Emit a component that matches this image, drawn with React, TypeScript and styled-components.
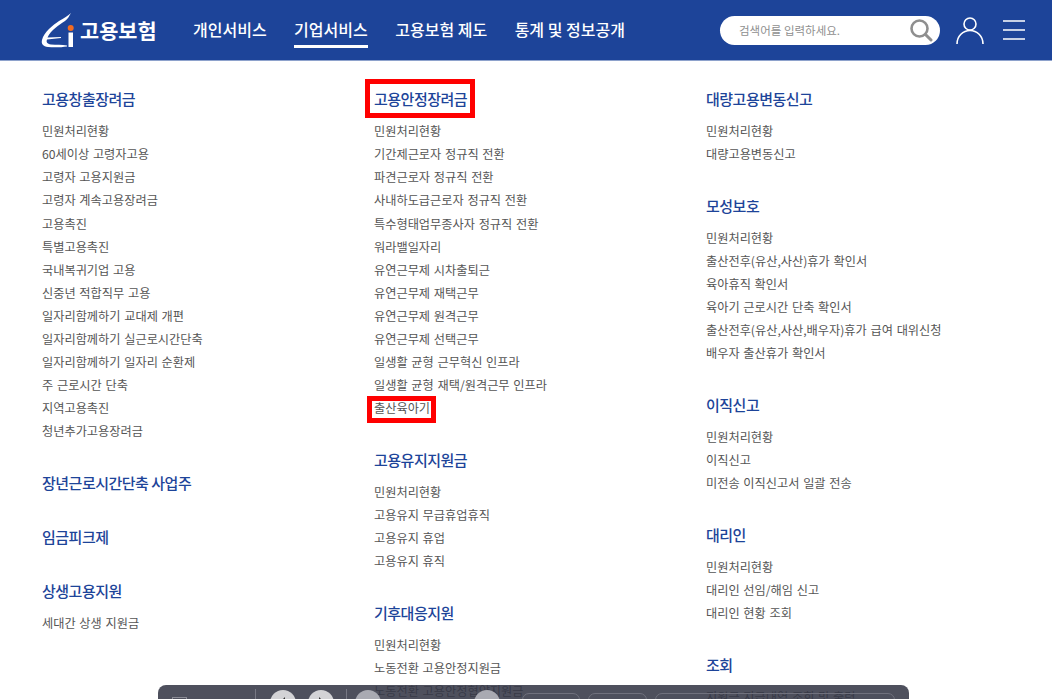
import React from "react";
import styled, { createGlobalStyle } from "styled-components";

const Global = createGlobalStyle`
  html, body { margin: 0; padding: 0; height: 100%; overflow: hidden; background: #fff; }
  body { font-family: "Noto Sans CJK KR", "Noto Sans", sans-serif; }
  * { box-sizing: border-box; }
`;

const Page = styled.div`
  position: relative;
  width: 1052px;
  height: 699px;
  overflow: hidden;
`;

const Header = styled.header`
  height: 61px;
  background: #1d4499;
  border-bottom: 1px solid #8ea2cc;
  display: flex;
  align-items: center;
  padding: 0 27px 0 41px;
`;

const Logo = styled.div`
  display: flex;
  align-items: center;
  gap: 6px;
  width: 152px;
  color: #fff;
  font-weight: 700;
  font-size: 20.8px;
`;

const Nav = styled.nav`
  display: flex;
  gap: 27.5px;
  flex: 1;
`;

const NavLink = styled.a<{ $active?: boolean }>`
  color: #fff;
  font-size: 16px;
  font-weight: 500;
  line-height: 24px;
  padding: 2px 0 4px;
  margin-top: 3px;
  white-space: nowrap;
  border-bottom: 3px solid ${(p) => (p.$active ? "#fff" : "transparent")};
`;

const Search = styled.div`
  width: 220px;
  height: 29px;
  border-radius: 14.5px;
  background: #fff;
  display: flex;
  align-items: center;
  justify-content: space-between;
  padding: 0 7px 0 19px;
  color: #8f8f8f;
  font-size: 11.5px;
`;

const HeaderIcons = styled.div`
  display: flex;
  align-items: center;
  gap: 19px;
  margin-left: 16px;
`;

const Columns = styled.main`
  display: grid;
  grid-template-columns: 332px 332px 1fr;
  padding: 22px 0 0 42px;
`;

const Section = styled.section<{ $bare?: boolean }>`
  padding-bottom: ${(p) => (p.$bare ? "16.6px" : "23.4px")};
`;

const Heading = styled.h3<{ $bare?: boolean }>`
  margin: 0 0 ${(p) => (p.$bare ? "10.4px" : "10.2px")};
`;

const HeadingText = styled.span<{ $marked?: boolean }>`
  position: relative;
  display: inline-block;
  font-size: 15px;
  line-height: 22px;
  font-weight: 500;
  letter-spacing: -0.5px;
  color: #1d4499;
  &::after {
    content: "";
    display: ${(p) => (p.$marked ? "block" : "none")};
    position: absolute;
    left: -9px;
    right: -8px;
    top: -9px;
    bottom: -8px;
    border: 5px solid #ff0000;
  }
`;

const List = styled.ul`
  list-style: none;
  margin: 0;
  padding: 0;
`;

const Item = styled.li`
  height: 23.1px;
  line-height: 23.1px;
  font-size: 12.2px;
  word-spacing: 1px;
  color: #555;
  white-space: nowrap;
`;

const ItemText = styled.span<{ $marked?: boolean }>`
  position: relative;
  display: inline-block;
  &::after {
    content: "";
    display: ${(p) => (p.$marked ? "block" : "none")};
    position: absolute;
    left: -7px;
    right: -6px;
    top: -1px;
    bottom: -3px;
    border: 5px solid #ff0000;
  }
`;

const Dock = styled.div`
  position: absolute;
  left: 158px;
  top: 685px;
  width: 751px;
  height: 30px;
  border-radius: 8px 8px 0 0;
  background: rgba(52, 54, 69, 0.87);
`;

const DockSquare = styled.span`
  position: absolute;
  left: 14px;
  top: 12px;
  width: 15px;
  height: 15px;
  border: 1px solid #8a8b95;
`;

const DockLine = styled.span<{ $x: number }>`
  position: absolute;
  left: ${(p) => p.$x}px;
  top: 4px;
  width: 1px;
  height: 24px;
  background: #777884;
`;

const DockRound = styled.span<{ $x: number; $dim?: boolean }>`
  position: absolute;
  left: ${(p) => p.$x}px;
  top: 5px;
  width: 26px;
  height: 26px;
  border-radius: 50%;
  background: ${(p) => (p.$dim ? "#a9aab2" : "#d3d3d6")};
  display: flex;
  align-items: center;
  justify-content: center;
`;

const DockPill = styled.span<{ $x: number; $w: number }>`
  position: absolute;
  left: ${(p) => p.$x}px;
  width: ${(p) => p.$w}px;
  top: 8px;
  height: 26px;
  border: 1px solid #70717d;
  border-radius: 7px;
`;

type Sec = { title: string; items?: string[]; marked?: boolean };

const col1: Sec[] = [
  {
    title: "고용창출장려금",
    items: [
      "민원처리현황", "60세이상 고령자고용", "고령자 고용지원금", "고령자 계속고용장려금", "고용촉진",
      "특별고용촉진", "국내복귀기업 고용", "신중년 적합직무 고용", "일자리함께하기 교대제 개편",
      "일자리함께하기 실근로시간단축", "일자리함께하기 일자리 순환제", "주 근로시간 단축", "지역고용촉진", "청년추가고용장려금",
    ],
  },
  { title: "장년근로시간단축 사업주" },
  { title: "임금피크제" },
  { title: "상생고용지원", items: ["세대간 상생 지원금"] },
];

const col2: Sec[] = [
  {
    title: "고용안정장려금",
    marked: true,
    items: [
      "민원처리현황", "기간제근로자 정규직 전환", "파견근로자 정규직 전환", "사내하도급근로자 정규직 전환",
      "특수형태업무종사자 정규직 전환", "워라밸일자리", "유연근무제 시차출퇴근", "유연근무제 재택근무",
      "유연근무제 원격근무", "유연근무제 선택근무", "일생활 균형 근무혁신 인프라", "일생활 균형 재택/원격근무 인프라", "출산육아기",
    ],
  },
  { title: "고용유지지원금", items: ["민원처리현황", "고용유지 무급휴업휴직", "고용유지 휴업", "고용유지 휴직"] },
  { title: "기후대응지원", items: ["민원처리현황", "노동전환 고용안정지원금", "노동전환 고용안정협약지원금"] },
];

const col3: Sec[] = [
  { title: "대량고용변동신고", items: ["민원처리현황", "대량고용변동신고"] },
  {
    title: "모성보호",
    items: [
      "민원처리현황", "출산전후(유산,사산)휴가 확인서", "육아휴직 확인서", "육아기 근로시간 단축 확인서",
      "출산전후(유산,사산,배우자)휴가 급여 대위신청", "배우자 출산휴가 확인서",
    ],
  },
  { title: "이직신고", items: ["민원처리현황", "이직신고", "미전송 이직신고서 일괄 전송"] },
  { title: "대리인", items: ["민원처리현황", "대리인 선임/해임 신고", "대리인 현황 조회"] },
  { title: "조회", items: ["지원금 지급내역 조회 및 출력"] },
];

function Column({ sections }: { sections: Sec[] }) {
  return (
    <div>
      {sections.map((s) => (
        <Section key={s.title} $bare={!s.items}>
          <Heading $bare={!s.items}>
            <HeadingText $marked={s.marked}>{s.title}</HeadingText>
          </Heading>
          {s.items && (
            <List>
              {s.items.map((it) => (
                <Item key={it}>
                  <ItemText $marked={it === "출산육아기"}>{it}</ItemText>
                </Item>
              ))}
            </List>
          )}
        </Section>
      ))}
    </div>
  );
}

export default function App() {
  return (
    <Page>
      <Global />
      <Header>
        <Logo>
          <svg width="33" height="35" viewBox="0 0 33 35" fill="none">
            <path
              d="M30 0 C28 3 27 6 24 8 C18 12 10 17 6.5 24.5 L20 24 L20 25 L6 26.5 C5 29 6 31 10 31.5 C15 32 21 31.5 26 32.5 L26 33.5 C20 34.5 12 34.5 7 34 C2 33.5 0 31 1 27 C3 19 12 12 18 8 C23 5 27 3 30 0 Z"
              fill="#fff"
            />
            <circle cx="29.7" cy="15" r="3" fill="#f36b21" />
            <rect x="27.5" y="19.5" width="4.5" height="14.5" fill="#fff" />
          </svg>
          <span>고용보험</span>
        </Logo>
        <Nav>
          <NavLink>개인서비스</NavLink>
          <NavLink $active>기업서비스</NavLink>
          <NavLink>고용보험 제도</NavLink>
          <NavLink>통계 및 정보공개</NavLink>
        </Nav>
        <Search>
          <span>검색어를 입력하세요.</span>
          <svg width="24" height="24" viewBox="0 0 24 24" fill="none" stroke="#8f8f8f">
            <circle cx="10.5" cy="10.5" r="8" strokeWidth="2.6" />
            <path d="M16.5 16.5 L22 22" strokeWidth="3" strokeLinecap="round" />
          </svg>
        </Search>
        <HeaderIcons>
          <svg width="28" height="28" viewBox="0 0 28 28" fill="none" stroke="#fff" strokeWidth="1.6">
            <circle cx="14" cy="8" r="6" />
            <path d="M1 28 C1 20 7 14.5 14 14.5 C21 14.5 27 20 27 28" />
          </svg>
          <svg width="22" height="20" viewBox="0 0 22 20" fill="none" stroke="#fff" strokeWidth="1.6">
            <path d="M0 1 H22 M0 10 H22 M0 19 H22" />
          </svg>
        </HeaderIcons>
      </Header>
      <Columns>
        <Column sections={col1} />
        <Column sections={col2} />
        <Column sections={col3} />
      </Columns>
      <Dock>
        <DockSquare />
        <DockLine $x={97} />
        <DockRound $x={112}>
          <svg width="10" height="12" viewBox="0 0 10 12"><path d="M7 0 L1 6 L7 12 Z" fill="#333" /></svg>
        </DockRound>
        <DockRound $x={150}>
          <svg width="10" height="12" viewBox="0 0 10 12"><path d="M3 0 L9 6 L3 12 Z" fill="#333" /></svg>
        </DockRound>
        <DockLine $x={188} />
        <DockRound $x={197} $dim />
        <DockRound $x={316} $dim />
        <DockPill $x={364} $w={58} />
        <DockPill $x={430} $w={59} />
        <DockPill $x={497} $w={240} />
      </Dock>
    </Page>
  );
}
